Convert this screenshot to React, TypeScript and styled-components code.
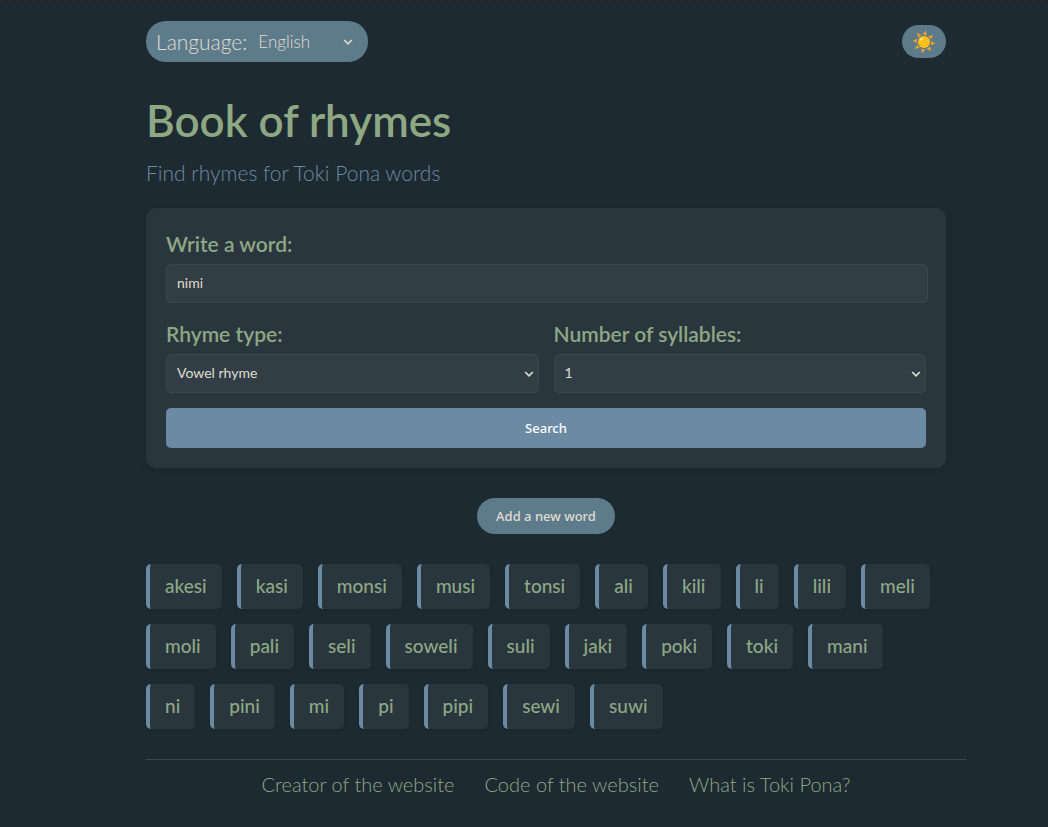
import React, { useState } from "react";
import styled, { createGlobalStyle } from "styled-components";

const color = {
  page: "#1e2a32",
  panel: "#2a363e",
  field: "#323e46",
  line: "#3b474e",
  green: "#8ea884",
  blue: "#6b8ba4",
  pill: "#5e7b8b",
  cream: "#e0dccf",
};

const GlobalStyle = createGlobalStyle`
  html { background: ${color.page}; }
  body {
    margin: 0;
    background: ${color.page};
    color: ${color.cream};
    font-family: Lato, "Open Sans", sans-serif;
    font-size: 21px;
    overflow-x: hidden;
  }
  input, select, button { font-family: inherit; }
`;

const TopEdge = styled.div`
  height: 1px;
  background: repeating-linear-gradient(90deg, #2e2a2a 0 5px, #211f20 5px 8px);
`;

const Page = styled.div`
  padding: 20px 0 28px 44px;
`;

const Container = styled.div`
  width: 100%;
  max-width: 800px;
  margin: 0 auto;
`;

const TopBar = styled.header`
  display: flex;
  justify-content: space-between;
  align-items: center;
`;

const LanguagePill = styled.div`
  display: flex;
  align-items: center;
  height: 41px;
  box-sizing: border-box;
  padding: 0 10px;
  gap: 11px;
  border-radius: 20px;
  background: ${color.pill};
  font-weight: 300;
  line-height: 39px;
`;

const SelectBox = styled.div`
  display: grid;
  align-items: center;

  > * { grid-area: 1 / 1; }
  > svg {
    justify-self: end;
    margin-right: 5px;
    pointer-events: none;
  }
`;

const LanguageSelect = styled.select`
  width: 100px;
  padding: 0;
  border: 0;
  appearance: none;
  background: transparent;
  color: ${color.cream};
  font-size: 17px;
  font-weight: 300;
`;

const ThemeButton = styled.button`
  display: flex;
  align-items: center;
  justify-content: center;
  width: 44px;
  height: 33px;
  padding: 0;
  border: 0;
  border-radius: 20px;
  background: ${color.pill};
`;

const Title = styled.h1`
  margin: 33px 0 0;
  color: ${color.green};
  font-size: 44px;
  font-weight: 600;
  line-height: 50px;
`;

const Subtitle = styled.p`
  margin: 15px 0 0;
  color: ${color.blue};
  font-weight: 300;
  line-height: 25px;
`;

const Card = styled.form`
  margin-top: 23px;
  padding: 24px 20px 20px;
  border-radius: 10px;
  background: ${color.panel};
  box-shadow: 0 4px 12px rgba(0, 0, 0, 0.1);
`;

const Fields = styled.div`
  display: flex;
  gap: 15px;
  margin: 19px 0 15px;
`;

const Field = styled.div`
  flex: 1;
  min-width: 0;
`;

const Label = styled.label`
  display: block;
  margin-bottom: 9px;
  color: ${color.green};
  font-weight: 600;
  line-height: 23px;
`;

const WordInput = styled.input`
  display: block;
  width: calc(100% + 2px);
  height: 39px;
  box-sizing: border-box;
  padding: 0 10px 2px;
  border: 1px solid ${color.line};
  border-radius: 5px;
  background: ${color.field};
  color: ${color.cream};
  font-size: 14px;
`;

const FieldSelect = styled.select`
  width: 100%;
  height: 39px;
  padding: 0 10px 2px;
  border: 1px solid ${color.line};
  border-radius: 5px;
  appearance: none;
  background: ${color.field};
  color: ${color.cream};
  font-size: 14px;
`;

const SearchButton = styled.button`
  display: block;
  width: 100%;
  height: 40px;
  padding: 0;
  border: 0;
  border-radius: 5px;
  background: ${color.blue};
  color: #fff;
  font-family: "Noto Sans", sans-serif;
  font-size: 13px;
  font-weight: 500;
`;

const AddButton = styled.button`
  display: block;
  height: 36px;
  margin: 30px auto;
  padding: 0 19px;
  border: 0;
  border-radius: 20px;
  background: ${color.pill};
  color: ${color.cream};
  font-family: "Noto Sans", sans-serif;
  font-size: 13px;
  font-weight: 500;
`;

const WordList = styled.ul`
  display: flex;
  flex-wrap: wrap;
  gap: 15px;
  margin: 0;
  padding: 0 5px 0 0;
  list-style: none;
`;

const Word = styled.li`
  padding: 9px 15px 11px;
  border-left: 4px solid ${color.blue};
  border-radius: 5px;
  background: ${color.panel};
  box-shadow: 0 2px 5px rgba(0, 0, 0, 0.1);
  color: ${color.green};
  font-size: 19px;
  font-weight: 500;
  line-height: 25px;
`;

const Footer = styled.footer`
  display: flex;
  justify-content: center;
  gap: 30px;
  margin: 30px -20px 0 0;
  padding-top: 13px;
  border-top: 1px solid ${color.line};
  font-size: 20px;
  font-weight: 300;
  line-height: 23px;
`;

const FooterLink = styled.a`
  color: ${color.green};
  text-decoration: none;
`;

const words = [
  "akesi", "kasi", "monsi", "musi", "tonsi", "ali", "kili", "li", "lili", "meli",
  "moli", "pali", "seli", "soweli", "suli", "jaki", "poki", "toki", "mani",
  "ni", "pini", "mi", "pi", "pipi", "sewi", "suwi",
];

const rays = [0, 45, 90, 135, 180, 225, 270, 315];

function SunIcon() {
  return (
    <svg width="22" height="22" viewBox="-11 -11 22 22" aria-hidden="true">
      <g transform="rotate(8)" fill="#f4a029">
        {rays.map((angle) => (
          <path key={angle} d="M-2.3 -6.7Q0 -7.7 2 -6.8L0.4 -10.8Q0 -11.3 -0.5 -10.7Z" transform={`rotate(${angle})`} />
        ))}
      </g>
      <circle r="6" fill="#fcc21b" />
      <ellipse cx="-2.6" cy="-2.8" rx="1.8" ry="1.2" transform="rotate(-42 -2.6 -2.8)" fill="#fee269" />
    </svg>
  );
}

function Chevron() {
  return (
    <svg width="10" height="8" viewBox="0 0 10 8" aria-hidden="true">
      <path d="M1.2 2L5 5.8L8.8 2" fill="none" stroke={color.cream} strokeWidth="1.7" />
    </svg>
  );
}

export default function App() {
  const [word, setWord] = useState("nimi");
  return (
    <>
      <GlobalStyle />
      <TopEdge />
      <Page>
        <Container>
          <TopBar>
            <LanguagePill>
              <label htmlFor="language">Language:</label>
              <SelectBox>
                <LanguageSelect id="language" defaultValue="English">
                  <option>English</option>
                  <option>Toki Pona</option>
                </LanguageSelect>
                <Chevron />
              </SelectBox>
            </LanguagePill>
            <ThemeButton type="button" aria-label="Light theme">
              <SunIcon />
            </ThemeButton>
          </TopBar>
          <main>
            <Title>Book of rhymes</Title>
            <Subtitle>Find rhymes for Toki Pona words</Subtitle>
            <Card onSubmit={(event) => event.preventDefault()}>
              <Label htmlFor="word">Write a word:</Label>
              <WordInput id="word" value={word} onChange={(event) => setWord(event.target.value)} />
              <Fields>
                <Field>
                  <Label htmlFor="type">Rhyme type:</Label>
                  <SelectBox>
                    <FieldSelect id="type">
                      <option>Vowel rhyme</option>
                    </FieldSelect>
                    <Chevron />
                  </SelectBox>
                </Field>
                <Field>
                  <Label htmlFor="syllables">Number of syllables:</Label>
                  <SelectBox>
                    <FieldSelect id="syllables">
                      <option>1</option>
                      <option>2</option>
                      <option>3</option>
                    </FieldSelect>
                    <Chevron />
                  </SelectBox>
                </Field>
              </Fields>
              <SearchButton type="submit">Search</SearchButton>
            </Card>
            <AddButton type="button">Add a new word</AddButton>
            <WordList>
              {words.map((item) => (
                <Word key={item}>{item}</Word>
              ))}
            </WordList>
          </main>
          <Footer>
            <FooterLink href="#creator">Creator of the website</FooterLink>
            <FooterLink href="#code">Code of the website</FooterLink>
            <FooterLink href="#toki-pona">What is Toki Pona?</FooterLink>
          </Footer>
        </Container>
      </Page>
    </>
  );
}
